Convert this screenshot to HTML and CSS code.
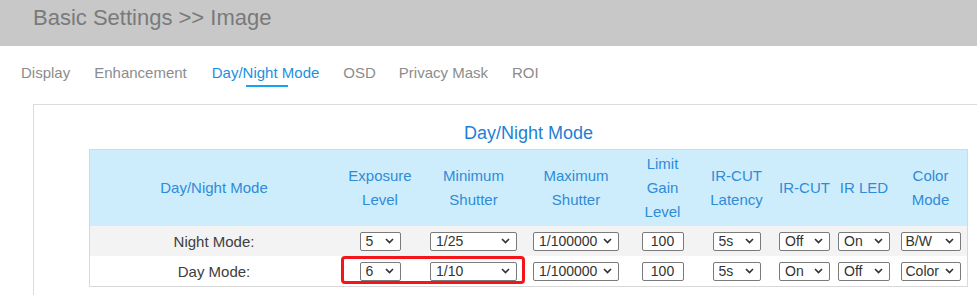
FILE: index.html
```html
<!DOCTYPE html>
<html lang="en">
<head>
<meta charset="utf-8">
<title>Basic Settings &gt;&gt; Image</title>
<link rel="stylesheet" href="styles.css">
</head>
<body class="page">
  <header class="topbar">
    <h1 class="topbar-title">Basic Settings &gt;&gt; Image</h1>
  </header>

  <nav class="tabs">
    <a class="tab">Display</a>
    <a class="tab">Enhancement</a>
    <a class="tab tab-active">Day/Night Mode</a>
    <a class="tab">OSD</a>
    <a class="tab">Privacy Mask</a>
    <a class="tab">ROI</a>
  </nav>

  <section class="panel">
    <div class="panel-inner">
      <h2 class="panel-title">Day/Night Mode</h2>
      <div class="table-wrap">
        <table class="mode-table">
          <colgroup>
            <col class="c1"><col class="c2"><col class="c3"><col class="c4"><col class="c5">
            <col class="c6"><col class="c7"><col class="c8"><col class="c9">
          </colgroup>
          <thead>
            <tr class="head-row">
              <th>Day/Night Mode</th>
              <th>Exposure<br>Level</th>
              <th>Minimum<br>Shutter</th>
              <th>Maximum<br>Shutter</th>
              <th>Limit<br>Gain<br>Level</th>
              <th>IR-CUT<br>Latency</th>
              <th>IR-CUT</th>
              <th>IR LED</th>
              <th>Color<br>Mode</th>
            </tr>
          </thead>
          <tbody>
            <tr class="row row-alt">
              <td class="label">Night Mode:</td>
              <td><select class="sel w-exp"><option>5</option></select></td>
              <td><select class="sel w-min"><option>1/25</option></select></td>
              <td><select class="sel w-max"><option>1/100000</option></select></td>
              <td><input class="num" type="text" value="100"></td>
              <td><select class="sel w-lat"><option>5s</option></select></td>
              <td><select class="sel w-ir"><option>Off</option></select></td>
              <td><select class="sel w-led"><option>On</option></select></td>
              <td><select class="sel w-col"><option>B/W</option></select></td>
            </tr>
            <tr class="row">
              <td class="label">Day Mode:</td>
              <td><select class="sel w-exp"><option>6</option></select></td>
              <td><select class="sel w-min"><option>1/10</option></select></td>
              <td><select class="sel w-max"><option>1/100000</option></select></td>
              <td><input class="num" type="text" value="100"></td>
              <td><select class="sel w-lat"><option>5s</option></select></td>
              <td><select class="sel w-ir"><option>On</option></select></td>
              <td><select class="sel w-led"><option>Off</option></select></td>
              <td><select class="sel w-col"><option>Color</option></select></td>
            </tr>
          </tbody>
        </table>
        <div class="highlight"></div>
      </div>
    </div>
  </section>
</body>
</html>
```

FILE: styles.css
```css
html, body {
  margin: 0;
  padding: 0;
  overflow: hidden;
  background: #ffffff;
}

.page {
  font-family: "Liberation Sans", Arial, sans-serif;
  color: #333333;
}

.topbar {
  height: 46px;
  background: #c8c8c8;
  padding: 3px 0 0 33px;
  box-sizing: border-box;
}

.topbar-title {
  margin: 0;
  font-size: 22px;
  line-height: 30px;
  font-weight: normal;
  color: #7a7a7a;
}

.tabs {
  display: flex;
  gap: 23px;
  padding-left: 21px;
  margin-top: 17px;
}

.tab {
  position: relative;
  font-size: 15px;
  line-height: 20px;
  padding-bottom: 4px;
  color: #8c8c8c;
  cursor: pointer;
}

.tab:nth-child(2) { margin-left: 1px; }

.tab-active {
  color: #1d8fe0;
  margin-left: 2px;
  margin-right: 1px;
}

.tab:nth-child(5) { margin-right: 1px; }

.tab-active::after {
  content: "";
  position: absolute;
  left: 50%;
  bottom: 0;
  width: 42px;
  height: 2px;
  margin-left: -20px;
  background: #17a4ef;
}

.panel {
  margin: 17px 0 0 33px;
  border-top: 1px solid #dcdcdc;
  border-left: 1px solid #dcdcdc;
  padding-top: 16px;
  height: 174px;
}

.panel-inner {
  margin-left: 55px;
  width: 879px;
}

.panel-title {
  margin: 0 0 4px 0;
  text-align: center;
  font-size: 18px;
  line-height: 24px;
  font-weight: normal;
  color: #1f7fd6;
}

.table-wrap {
  position: relative;
}

.mode-table {
  width: 879px;
  table-layout: fixed;
  border-collapse: separate;
  border-spacing: 0;
  border: 1px solid #d8d8d8;
  font-size: 15px;
}

.c1 { width: 248px; }
.c2 { width: 84px; }
.c3 { width: 103px; }
.c4 { width: 102px; }
.c5 { width: 71px; }
.c6 { width: 77px; }
.c7 { width: 59px; }
.c8 { width: 60px; }
.c9 { width: 73px; }

.head-row th {
  height: 76px;
  padding: 0;
  background: #cdedfc;
  color: #2f8bd8;
  font-weight: normal;
  line-height: 24px;
  text-align: center;
  vertical-align: middle;
  white-space: nowrap;
}

.row td {
  height: 30px;
  padding: 0;
  text-align: center;
  vertical-align: middle;
}

.row-alt td {
  background: #f3f3f3;
}

.label {
  color: #404040;
}

.sel {
  -webkit-appearance: none;
  appearance: none;
  box-sizing: border-box;
  height: 19px;
  margin: 0;
  padding: 0 0 0 5px;
  border: 1px solid #7a7a7a;
  border-radius: 2px;
  background-color: #ffffff;
  background-image: url("data:image/svg+xml,%3Csvg xmlns='http://www.w3.org/2000/svg' width='9' height='6' viewBox='0 0 9 6'%3E%3Cpath d='M1 1l3.5 3.5L8 1' fill='none' stroke='%23333' stroke-width='1.7'/%3E%3C/svg%3E");
  background-repeat: no-repeat;
  background-position: right 6px center;
  font-family: "Liberation Sans", Arial, sans-serif;
  font-size: 14px;
  color: #333333;
  vertical-align: middle;
}

.w-exp { width: 41px; }
.w-min { width: 87px; }
.w-max { width: 86px; }
.w-lat { width: 48px; }
.w-ir { width: 51px; }
.w-led { width: 52px; }
.w-col { width: 60px; padding-left: 4px; }

.num {
  box-sizing: border-box;
  width: 42px;
  height: 19px;
  margin: 0;
  padding: 0;
  border: 1px solid #7a7a7a;
  border-radius: 2px;
  text-align: center;
  font-family: "Liberation Sans", Arial, sans-serif;
  font-size: 14px;
  color: #333333;
  vertical-align: middle;
}

.highlight {
  position: absolute;
  left: 252px;
  top: 107px;
  width: 184px;
  height: 28px;
  box-sizing: border-box;
  border: 3px solid #f5141a;
  border-radius: 4px;
  pointer-events: none;
}
```
